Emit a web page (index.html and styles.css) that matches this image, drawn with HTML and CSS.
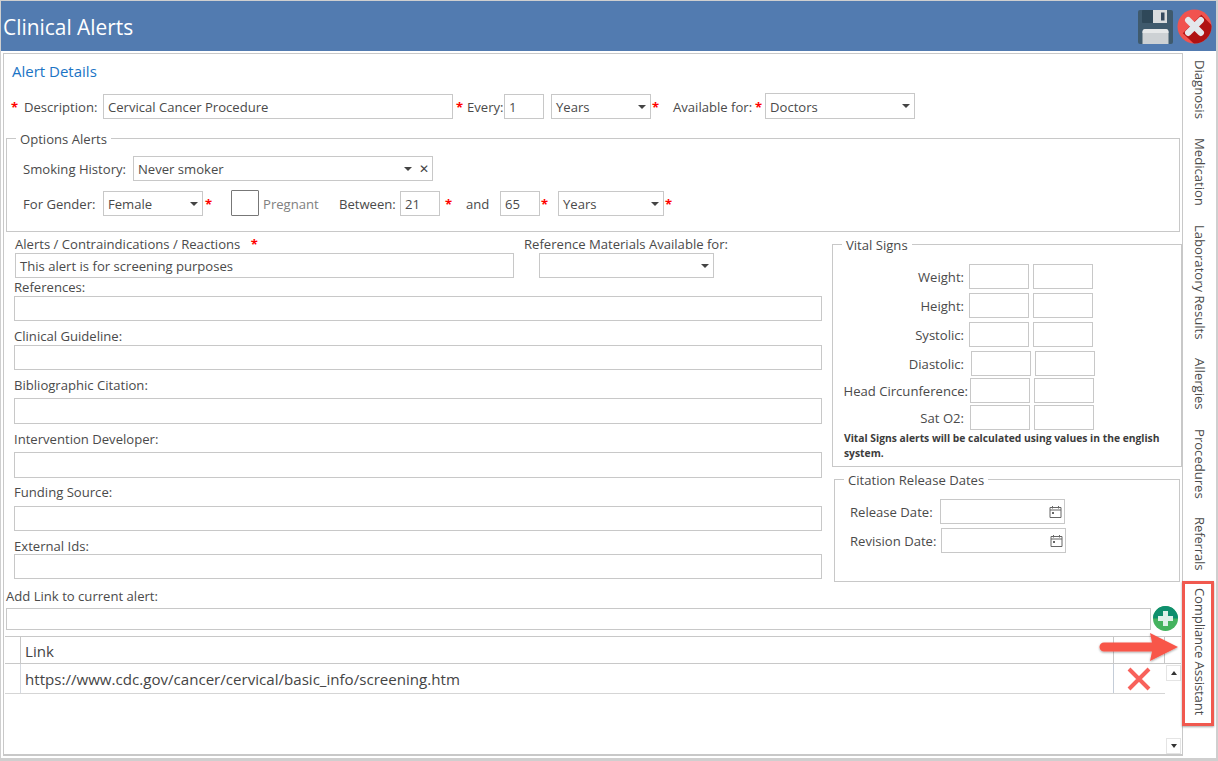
FILE: index.html
```html
<!DOCTYPE html>
<html lang="en">
<head>
<meta charset="utf-8">
<title>Clinical Alerts</title>
<link rel="stylesheet" href="styles.css">
</head>
<body>
<div class="window">
  <header class="titlebar">
    <h1 class="title">Clinical Alerts</h1>
    <div class="actions">
      <svg class="save-icon" viewBox="0 0 35 34" aria-label="Save">
        <rect width="35" height="34" rx="2" fill="#3f5a6d"/>
        <rect x="4" width="25" height="13" rx="1" fill="#2f4859"/>
        <rect x="15" width="14" height="13" fill="#d9dcde"/>
        <rect x="23" y="2.5" width="3.5" height="8" fill="#34495e"/>
        <path d="M4.5 34V22a3 3 0 0 1 3-3h20a3 3 0 0 1 3 3v12z" fill="#cdd1d4"/>
        <path d="M4.5 23v-1a3 3 0 0 1 3-3h20a3 3 0 0 1 3 3v1z" fill="#e6e8e9"/>
      </svg>
      <svg class="close-icon" viewBox="0 0 36 36" aria-label="Close">
        <defs><clipPath id="disc"><circle cx="18" cy="18" r="17.5"/></clipPath></defs>
        <circle cx="18" cy="18" r="17.5" fill="#f1534f"/>
        <path d="M25 6 L40 21 V40 H22 L6 25Z" fill="#b01212" clip-path="url(#disc)"/>
        <path d="M11.5 11.5 L24.5 24.5 M24.5 11.5 L11.5 24.5" stroke="#e4e8ec" stroke-width="6.5" stroke-linecap="round"/>
      </svg>
    </div>
  </header>

  <div class="content">
    <main class="panel">
      <h2 class="section-title">Alert Details</h2>

      <div class="row row-details">
        <span class="req req-first">*</span>
        <span class="lbl lbl-desc">Description:</span>
        <div class="box w-desc">Cervical Cancer Procedure</div>
        <span class="req req-every">*</span>
        <span class="lbl lbl-every">Every:</span>
        <div class="box w-num-every">1</div>
        <div class="box select w-years">Years</div>
        <span class="req req-tight">*</span>
        <span class="lbl lbl-avail">Available for:</span>
        <span class="req req-avail">*</span>
        <div class="box select w-doctors">Doctors</div>
      </div>

      <fieldset class="group group-options">
        <legend class="legend">Options Alerts</legend>
        <div class="row row-smoking">
          <span class="lbl lbl-smoking">Smoking History:</span>
          <div class="box select clearable w-smoking">Never smoker<span class="clear">✕</span></div>
        </div>
        <div class="row row-gender">
          <span class="lbl lbl-gender">For Gender:</span>
          <div class="box select w-gender">Female</div>
          <span class="req req-gender">*</span>
          <div class="check"></div>
          <span class="lbl lbl-pregnant">Pregnant</span>
          <span class="lbl lbl-between">Between:</span>
          <div class="box w-age">21</div>
          <span class="req req-age">*</span>
          <span class="lbl lbl-and">and</span>
          <div class="box w-age">65</div>
          <span class="req req-tight">*</span>
          <div class="box select w-years2">Years</div>
          <span class="req req-tight">*</span>
        </div>
      </fieldset>

      <div class="lower">
        <div class="left-col">
          <div class="row-alerts">
            <div class="alerts-main">
              <div class="field-label">Alerts / Contraindications / Reactions <span class="req req-alerts">*</span></div>
              <div class="box w-alerts">This alert is for screening purposes</div>
            </div>
            <div class="alerts-side">
              <div class="field-label">Reference Materials Available for:</div>
              <div class="box select w-ref"></div>
            </div>
          </div>
          <div class="field f-refs"><div class="field-label">References:</div><div class="box w-full"></div></div>
          <div class="field f-clin"><div class="field-label">Clinical Guideline:</div><div class="box w-full"></div></div>
          <div class="field f-bib"><div class="field-label">Bibliographic Citation:</div><div class="box w-full h-26"></div></div>
          <div class="field f-dev"><div class="field-label">Intervention Developer:</div><div class="box w-full h-26"></div></div>
          <div class="field f-fund"><div class="field-label">Funding Source:</div><div class="box w-full"></div></div>
          <div class="field f-ext"><div class="field-label">External Ids:</div><div class="box w-full"></div></div>
        </div>

        <div class="right-col">
          <fieldset class="group group-vitals">
            <legend class="legend">Vital Signs</legend>
            <div class="vital v-a"><span class="vital-label">Weight:</span><div class="box w-vital"></div><div class="box w-vital"></div></div>
            <div class="vital v-a"><span class="vital-label">Height:</span><div class="box w-vital"></div><div class="box w-vital"></div></div>
            <div class="vital v-a"><span class="vital-label">Systolic:</span><div class="box w-vital"></div><div class="box w-vital"></div></div>
            <div class="vital v-c"><span class="vital-label">Diastolic:</span><div class="box w-vital"></div><div class="box w-vital"></div></div>
            <div class="vital v-head v-tight"><span class="vital-label">Head Circunference:</span><div class="box w-vital"></div><div class="box w-vital"></div></div>
            <div class="vital v-b v-tight"><span class="vital-label">Sat O2:</span><div class="box w-vital"></div><div class="box w-vital"></div></div>
            <p class="vital-note">Vital Signs alerts will be calculated using values in the english system.</p>
          </fieldset>

          <fieldset class="group group-dates">
            <legend class="legend">Citation Release Dates</legend>
            <div class="date-row">
              <span class="lbl date-label">Release Date:</span>
              <div class="box w-date"><svg class="cal" viewBox="0 0 13 13"><path d="M1 2.5h11v10H1zM1 5h11M3.5 1v2.5M9.5 1v2.5" fill="none" stroke="#666"/><rect x="3" y="7" width="2" height="2" fill="#666"/></svg></div>
            </div>
            <div class="date-row date-row-2">
              <span class="lbl date-label date-label-2">Revision Date:</span>
              <div class="box w-date"><svg class="cal" viewBox="0 0 13 13"><path d="M1 2.5h11v10H1zM1 5h11M3.5 1v2.5M9.5 1v2.5" fill="none" stroke="#666"/><rect x="3" y="7" width="2" height="2" fill="#666"/></svg></div>
            </div>
          </fieldset>
        </div>
      </div>

      <div class="link-block">
        <div class="field-label">Add Link to current alert:</div>
        <div class="link-input-row">
          <div class="box w-link"></div>
          <svg class="plus-icon" viewBox="0 0 25 25" aria-label="Add">
            <defs><clipPath id="plusdisc"><circle cx="12.5" cy="12.5" r="12.5"/></clipPath></defs>
            <circle cx="12.5" cy="12.5" r="12.5" fill="#45b35f"/>
            <rect width="25" height="12.5" fill="#0f8f6e" clip-path="url(#plusdisc)"/>
            <path d="M12.5 5v15M5 12.5h15" stroke="#dff1ea" stroke-width="5"/>
          </svg>
        </div>
      </div>

      <section class="grid">
        <div class="grid-head">
          <div class="cell-gutter"></div>
          <div class="cell-link">Link</div>
          <div class="cell-act"></div>
          <div class="cell-end"></div>
        </div>
        <div class="grid-body">
          <div class="grid-rows">
            <div class="grid-row">
              <div class="cell-gutter cell-gutter-row"></div>
              <div class="cell-link cell-link-row">https://www.cdc.gov/cancer/cervical/basic_info/screening.htm</div>
              <div class="cell-act cell-act-row">
                <svg class="del-icon" viewBox="0 0 24 24" aria-label="Delete"><path d="M2 2L22 22M22 2L2 22" stroke="#f8615b" stroke-width="4"/></svg>
              </div>
            </div>
          </div>
          <div class="scroll">
            <div class="scroll-btn"><span class="tri-up"></span></div>
            <div class="scroll-btn"><span class="tri-down"></span></div>
          </div>
        </div>
      </section>
    </main>

    <nav class="tabs">
      <div class="tab">Diagnosis</div>
      <div class="tab">Medication</div>
      <div class="tab">Laboratory Results</div>
      <div class="tab">Allergies</div>
      <div class="tab">Procedures</div>
      <div class="tab tab-narrow">Referrals</div>
      <div class="tab tab-narrow">Compliance Assistant</div>
    </nav>
  </div>

  <div class="callout-box"></div>
  <svg class="callout-arrow" viewBox="0 0 84 34" aria-hidden="true">
    <defs><filter id="sh" x="-10%" y="-20%" width="120%" height="150%"><feDropShadow dx="0" dy="1" stdDeviation="1" flood-color="#000" flood-opacity=".35"/></filter></defs>
    <path d="M4 12.5H52L50 3L78 17L50 31L52 21.5H4a4.5 4.5 0 0 1 0-9z" fill="#f8564a" filter="url(#sh)"/>
  </svg>
</div>
</body>
</html>
```
FILE: styles.css
```css
* { box-sizing: border-box; }
html, body { margin: 0; padding: 0; }
body {
  width: 1218px;
  height: 761px;
  overflow: hidden;
  background: #fff;
  color: #4a4a4a;
  font-family: "Open Sans", "Liberation Sans", sans-serif;
  font-size: 13.1px;
}
.window {
  position: relative;
  width: 1218px;
  height: 761px;
  display: flex;
  flex-direction: column;
  border-style: solid;
  border-color: #cfcfcf;
  border-width: 1px 2px 3px 1px;
}
.titlebar {
  flex: none;
  height: 50px;
  background: #527bb0;
  display: flex;
  align-items: center;
  justify-content: space-between;
  padding: 0 4px 0 2px;
}
.title { margin: 2px 0 0; color: #fff; font-size: 20.9px; font-weight: 400; line-height: 48px; }
.actions { display: flex; align-items: center; gap: 4px; padding-top: 1px; }
.save-icon { width: 35px; height: 34px; display: block; }
.close-icon { width: 35px; height: 35px; display: block; }

.content { flex: 1; display: flex; min-height: 0; padding: 2px 0 2px 2px; }
.panel {
  width: 1180px;
  flex: none;
  display: flex;
  flex-direction: column;
  border: 1px solid #c8c8c8;
  border-bottom-width: 2px;
}
.section-title {
  margin: 6px 0 0 8px;
  font-size: 15px;
  line-height: 22px;
  font-weight: 400;
  color: #1b74c5;
}
.row { display: flex; align-items: flex-end; }
.row-details { height: 26px; margin-top: 11px; margin-left: 7px; }

.lbl { line-height: 24px; white-space: nowrap; }
.req { color: #f00; font-weight: 700; line-height: 24px; font-size: 13px; }
.req-first { width: 13px; }
.lbl-desc { width: 79px; }
.req-every { margin-left: 3px; width: 11px; }
.lbl-every { width: 37px; }
.req-tight { margin-left: 1px; width: 8px; }
.lbl-avail { margin-left: 13px; width: 82px; }
.req-avail { width: 10px; }

.box {
  position: relative;
  height: 25px;
  border: 1px solid #c8c8c8;
  background: #fff;
  line-height: 24px;
  padding-left: 4px;
  white-space: nowrap;
  flex: none;
}
.h-26 { height: 26px; }
.select::after {
  content: "";
  position: absolute;
  right: 4px;
  top: 10px;
  border-style: solid;
  border-width: 4px 4px 0;
  border-color: #444 transparent transparent;
}
.clearable::after { right: 20px; }
.clear {
  position: absolute;
  right: 3px;
  top: 0;
  font-size: 11.5px;
  color: #444;
}
.w-desc { width: 350px; }
.w-num-every { width: 40px; margin-right: 7px; }
.w-years { width: 100px; }
.w-doctors { width: 150px; height: 26px; line-height: 26px; }
.group {
  margin: 0;
  border: 1px solid #c8c8c8;
  min-width: 0;
}
.legend { padding: 2px 4px 0; line-height: 18px; }
.group-options {
  margin: 9px 0 0 2px;
  width: 1174px;
  height: 104px;
  padding: 8px 0 0 16px;
}
.group-options .legend { margin-left: -7px; }
.lbl-smoking { width: 110px; }
.row-smoking { height: 25px; }
.w-smoking { width: 300px; }
.row-gender { height: 25px; margin-top: 10px; }
.lbl-gender { width: 80px; }
.w-gender { width: 100px; }
.req-gender { margin-left: 2px; width: 26px; }
.check { width: 28px; height: 26px; border: 1px solid #777; border-radius: 1px; flex: none; }
.lbl-pregnant { margin-left: 4px; width: 76px; color: #808080; }
.lbl-between { width: 61px; }
.w-age { width: 40px; }
.req-age { margin-left: 5px; width: 21px; }
.lbl-and { width: 34px; }
.w-years2 { width: 106px; margin-left: 9px; }

.lower { display: flex; margin-top: 4px; margin-left: 10px; height: 346px; }
.left-col { width: 808px; flex: none; }
.row-alerts { display: flex; }
.alerts-main { width: 510px; padding-left: 1px; flex: none; }
.alerts-side { flex: none; }
.alerts-side .box { margin-left: 15px; }
.field-label { height: 17px; line-height: 17px; white-space: nowrap; }
.req-alerts { margin-left: 7px; line-height: 17px; }
.w-alerts { width: 499px; }
.w-ref { width: 175px; }
.w-full { width: 808px; }
.f-refs { margin-top: 1px; }
.f-clin { margin-top: 7px; }
.f-bib { margin-top: 7px; }
.f-bib .field-label { margin-bottom: 4px; }
.f-dev { margin-top: 7px; }
.f-dev .field-label { margin-bottom: 4px; }
.f-fund { margin-top: 6px; }
.f-fund .field-label { margin-bottom: 5px; }
.f-ext { margin-top: 7px; }
.f-ext .field-label { height: 16px; }

.right-col { margin-left: 10px; margin-top: -2px; width: 350px; flex: none; }
.group-vitals { width: 350px; height: 233px; padding: 0; }
.group-vitals .legend { margin-left: 9px; }
.vital { display: flex; align-items: center; gap: 4px; height: 25px; margin-top: 4px; }
.group-vitals .legend + .vital { margin-top: 10px; }
.v-tight { margin-top: 2px; }
.vital-label { text-align: right; white-space: nowrap; line-height: 26px; }
.v-a .vital-label { width: 131px; margin-right: 1px; }
.v-c .vital-label { width: 131px; margin-right: 3px; }
.v-b .vital-label { width: 131px; margin-right: 2px; }
.v-head .vital-label { width: 135px; margin-right: -2px; }
.w-vital { width: 60px; }
.vital-note { margin: 1px 0 0 11px; width: 330px; font-size: 10.3px; line-height: 15px; font-weight: 700; color: #3c3c3c; }

.group-dates { width: 346px; height: 113px; margin: 2px 0 0 2px; padding: 0 0 0 15px; }
.group-dates .legend { margin-left: -6px; }
.date-row { display: flex; align-items: center; margin-top: 10px; }
.date-row-2 { margin-top: 4px; }
.date-label { width: 90px; }
.date-label-2 { width: 91px; }
.w-date { width: 125px; }
.cal { position: absolute; right: 2px; top: 5px; width: 13px; height: 13px; }

.link-block { margin: 6px 0 0 2px; }
.link-input-row { display: flex; align-items: center; margin-top: 1px; height: 25px; }
.w-link { width: 1145px; height: 22px; }
.plus-icon { width: 25px; height: 25px; margin-left: 2px; flex: none; }

.grid { flex: 1; margin: 5px 1px 0 1px; display: flex; flex-direction: column; min-height: 0; }
.grid-head {
  display: flex;
  height: 28px;
  border-top: 1px solid #c8c8c8;
  border-bottom: 1px solid #c8c8c8;
  flex: none;
}
.cell-gutter { width: 16px; flex: none; border-right: 1px solid #c8c8c8; }
.cell-gutter-row { border-right-color: #d5d9e0; }
.cell-link { width: 1092px; flex: none; padding-left: 4px; font-size: 15.1px; line-height: 29px; color: #444; }
.cell-link-row { line-height: 31px; }
.cell-act { width: 52px; flex: none; border-left: 1px solid #c8c8c8; border-right: 1px solid #c8c8c8; }
.cell-end { flex: 1; }
.grid-body { flex: 1; display: flex; min-height: 0; }
.grid-rows { width: 1160px; flex: none; }
.grid-row { display: flex; height: 30px; border-bottom: 1px solid #d5d5d5; }
.cell-act-row { border-right: none; border-left-color: #c5cdd8; display: flex; align-items: center; justify-content: center; padding-right: 2px; }
.del-icon { width: 24px; height: 24px; margin-top: 1px; }
.scroll { flex: 1; display: flex; flex-direction: column; justify-content: space-between; padding: 1px 0 0 1px; }
.scroll-btn { width: 15px; height: 16px; border: 1px solid #e4e4e4; display: flex; align-items: center; justify-content: center; }
.tri-up, .tri-down { width: 0; height: 0; border-style: solid; }
.tri-up { border-width: 0 3.5px 4px; border-color: transparent transparent #333; }
.tri-down { border-width: 4px 3.5px 0; border-color: #333 transparent transparent; }

.tabs {
  flex: 1;
  display: flex;
  flex-direction: column;
  align-items: center;
  gap: 19px;
  padding: 7px 0 0 0;
}
.tab { writing-mode: vertical-rl; white-space: nowrap; line-height: 14px; color: #4a4a4a; }
.tab-narrow { letter-spacing: -0.15px; margin-top: -1px; }

.callout-box {
  position: absolute;
  left: 1181px;
  top: 580px;
  width: 32px;
  height: 145px;
  border: 3px solid #f0594f;
  box-shadow: 0 1px 2px rgba(0,0,0,.35);
}
.callout-arrow {
  position: absolute;
  left: 1099px;
  top: 629px;
  width: 84px;
  height: 34px;
  overflow: visible;
}
```
